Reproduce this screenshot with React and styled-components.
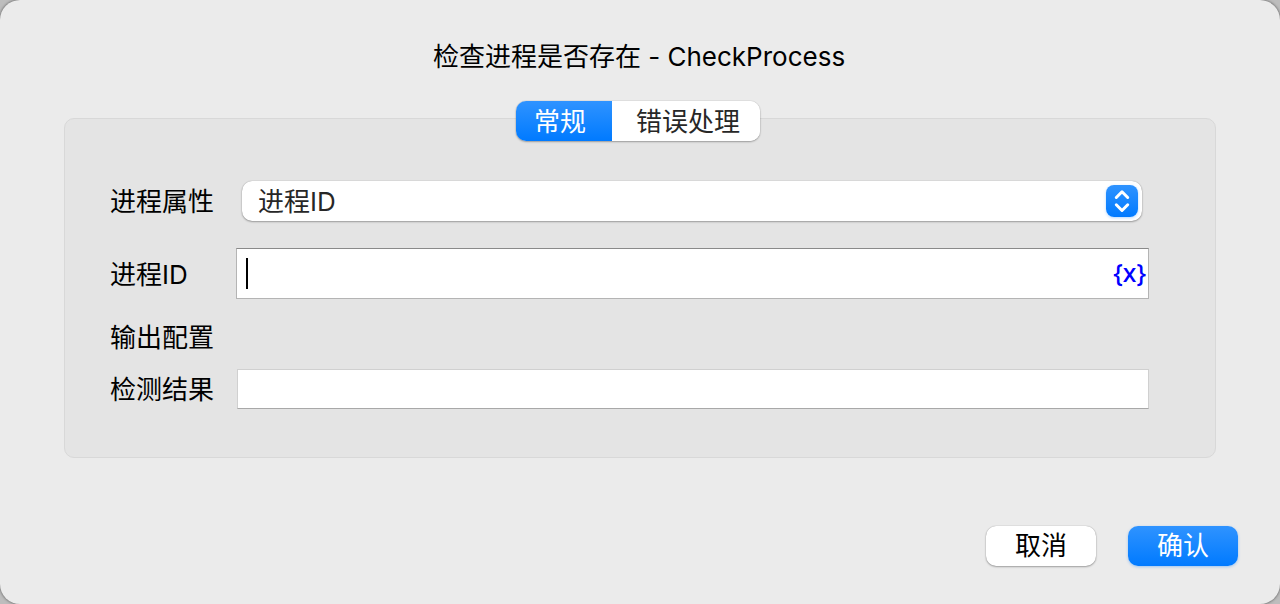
import React, { useState } from "react";
import styled, { createGlobalStyle, css } from "styled-components";

const GlobalStyle = createGlobalStyle`
  * { box-sizing: border-box; }
  body {
    margin: 0;
    background: #bdbdbd;
    color: #000;
    font-family: Inter, "Noto Sans CJK SC", sans-serif;
    font-size: 26px;
    line-height: 40px;
  }
  button, input, select { font: inherit; color: inherit; }
`;

const blue = "linear-gradient(#2f93ff, #007aff)";
const raised = "0 0 1px rgba(0, 0, 0, 0.35), 0 1px 2px rgba(0, 0, 0, 0.3)";

const Dialog = styled.form`
  display: flex;
  flex-direction: column;
  min-height: 100vh;
  padding: 37px 42px 38px;
  background: #ebebeb;
  border-radius: 20px;
  box-shadow: 0 0 3px rgba(0, 0, 0, 0.6);
`;

const Title = styled.h1`
  margin: 0;
  padding-right: 2px;
  font-size: 26px;
  font-weight: 400;
  text-align: center;
`;

const Panel = styled.section`
  margin: 41px 22px 60px;
  background: #e4e4e4;
  border: 1px solid #d8d8d8;
  border-radius: 10px;
`;

const TabBar = styled.div`
  display: flex;
  justify-content: center;
  margin-top: -18px;
  padding-right: 4px;
`;

const TabList = styled.div`
  display: flex;
  border-radius: 10px;
  background: #fff;
  box-shadow: ${raised};
`;

const Tab = styled.button`
  height: 40px;
  padding: 2px 20px 0 24px;
  border: 0;
  background: #fff;
  color: #272727;
  line-height: 38px;
  border-radius: 0 10px 10px 0;
  ${(p) =>
    p.$first &&
    css`
      padding: 2px 26px 0 18px;
      border-radius: 10px 0 0 10px;
    `}
  ${(p) =>
    p.$active &&
    css`
      background: ${blue};
      color: #fff;
    `}
`;

const Fields = styled.div`
  padding: 13px 66px 48px 45px;
`;

const Row = styled.div`
  display: flex;
  align-items: center;
  margin-top: ${(p) => p.$gap}px;
`;

const Label = styled.label`
  flex: 0 0 126px;
  padding-top: 2px;
  line-height: 38px;
`;

const Heading = styled.h2`
  margin: 0;
  padding-top: 2px;
  font-size: 26px;
  font-weight: 400;
  line-height: 28px;
`;

const SelectBox = styled.div`
  flex: 1;
  display: grid;
  align-items: center;
  margin: 0 7px 0 6px;
  border-radius: 10px;
  background: #fff;
  box-shadow: ${raised};
  > * { grid-area: 1 / 1; }
`;

const Select = styled.select`
  appearance: none;
  width: 100%;
  height: 40px;
  padding: 2px 44px 0 16px;
  border: 0;
  border-radius: 10px;
  outline: 0;
  background: transparent;
  color: #272727;
  line-height: 38px;
`;

const Stepper = styled.span`
  display: flex;
  justify-self: end;
  width: 32px;
  height: 32px;
  margin-right: 4px;
  border-radius: 8px;
  background: ${blue};
  box-shadow: 0 1px 3px rgba(0, 122, 255, 0.3);
  pointer-events: none;
`;

const FocusedField = styled.div`
  flex: 1;
  display: flex;
  align-items: center;
  height: 51px;
  padding: 0 2px 0 9px;
  background: #fff;
  border: 1px solid #b4b4b4;
  border-top-color: #8a8a8a;
`;

const Caret = styled.span`
  width: 2px;
  height: 31px;
  background: #000;
`;

const BareInput = styled.input`
  flex: 1;
  min-width: 0;
  height: 40px;
  padding: 0;
  border: 0;
  outline: 0;
  background: transparent;
  caret-color: transparent;
`;

const VariableButton = styled.button`
  padding: 0 0 4px;
  border: 0;
  background: none;
  color: #0000ff;
  font-family: "Noto Sans", sans-serif;
  font-size: 25px;
  font-weight: 500;
`;

const TextInput = styled.input`
  flex: 1;
  min-width: 0;
  height: 40px;
  margin-left: 1px;
  padding: 0 8px;
  border: 1px solid #d0d0d0;
  border-bottom-color: #a8a8a8;
  border-radius: 0;
  outline: 0;
  background: #fff;
`;

const Footer = styled.footer`
  display: flex;
  justify-content: flex-end;
  gap: 32px;
  margin-top: auto;
`;

const PushButton = styled.button`
  width: 110px;
  height: 40px;
  padding: 0;
  border: 0;
  border-radius: 10px;
  line-height: 40px;
  background: ${(p) => (p.$primary ? blue : "#fff")};
  color: ${(p) => (p.$primary ? "#fff" : "#000")};
  box-shadow: ${(p) => (p.$primary ? "0 1px 3px rgba(0, 122, 255, 0.35)" : raised)};
`;

export default function App() {
  const [tab, setTab] = useState("general");
  return (
    <>
      <GlobalStyle />
      <Dialog onSubmit={(e) => e.preventDefault()}>
        <Title>检查进程是否存在 - CheckProcess</Title>
        <Panel>
          <TabBar>
            <TabList role="tablist">
              <Tab
                type="button"
                role="tab"
                aria-selected={tab === "general"}
                $first
                $active={tab === "general"}
                onClick={() => setTab("general")}
              >
                常规
              </Tab>
              <Tab
                type="button"
                role="tab"
                aria-selected={tab === "errors"}
                $active={tab === "errors"}
                onClick={() => setTab("errors")}
              >
                错误处理
              </Tab>
            </TabList>
          </TabBar>
          <Fields>
            <Row $gap={27}>
              <Label htmlFor="attribute">进程属性</Label>
              <SelectBox>
                <Select id="attribute">
                  <option>进程ID</option>
                </Select>
                <Stepper>
                  <svg width="32" height="32" viewBox="0 0 32 32" fill="none" stroke="#fff" strokeWidth="3" strokeLinecap="round" strokeLinejoin="round" aria-hidden="true">
                    <path d="M10.3 12.5 16 6.8l5.7 5.7M10.3 19.8l5.7 5.7 5.7-5.7" />
                  </svg>
                </Stepper>
              </SelectBox>
            </Row>
            <Row $gap={27}>
              <Label htmlFor="process">进程ID</Label>
              <FocusedField>
                <Caret />
                <BareInput id="process" type="text" />
                <VariableButton type="button">{"{x}"}</VariableButton>
              </FocusedField>
            </Row>
            <Row $gap={23}>
              <Heading>输出配置</Heading>
            </Row>
            <Row $gap={17}>
              <Label htmlFor="result">检测结果</Label>
              <TextInput id="result" type="text" />
            </Row>
          </Fields>
        </Panel>
        <Footer>
          <PushButton type="button">取消</PushButton>
          <PushButton type="submit" $primary>确认</PushButton>
        </Footer>
      </Dialog>
    </>
  );
}
